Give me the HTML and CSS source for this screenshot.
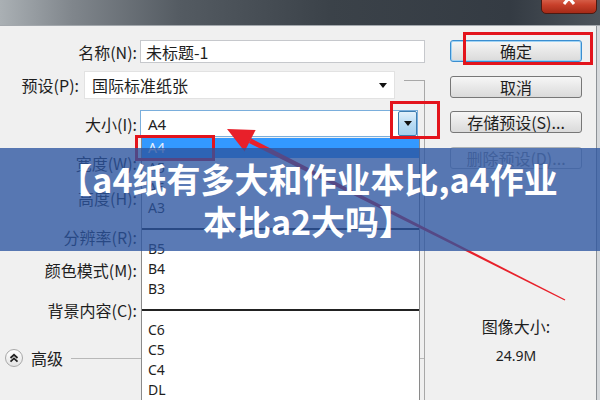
FILE: index.html
```html
<!DOCTYPE html>
<html lang="zh-CN">
<head>
    <meta charset="UTF-8">
    <meta name="viewport" content="width=device-width, initial-scale=1.0">
    <title>新建</title>
    <link rel="stylesheet" href="styles.css">
</head>
<body>
<div class="window">
    <div class="titlebar">
        <div class="close">
            <svg width="16" height="12" viewBox="0 0 16 12"><path d="M3 -3 L13 9 M13 -3 L3 9" stroke="#fff" stroke-width="3" fill="none"/></svg>
        </div>
    </div>

    <div class="dialog">
        <div class="form">
            <div class="row r-name">
                <span class="label">名称(N):</span>
                <div class="input">未标题-1</div>
            </div>
            <div class="row r-preset">
                <span class="label short">预设(P):</span>
                <div class="select preset">国际标准纸张<span class="tri"></span></div>
            </div>
            <div class="row r-size">
                <span class="label">大小(I):</span>
                <div class="select size">A4<span class="drop-btn"><span class="tri"></span></span></div>
            </div>
            <div class="row r-width"><span class="label">宽度(W):</span></div>
            <div class="row r-height"><span class="label">高度(H):</span></div>
            <div class="row r-res"><span class="label">分辨率(R):</span></div>
            <div class="row r-mode"><span class="label">颜色模式(M):</span></div>
            <div class="row r-bg"><span class="label">背景内容(C):</span></div>
            <div class="row r-adv">
                <span class="adv-icon">
                    <svg width="18" height="18" viewBox="0 0 18 18"><path d="M5.5 9 L9 5.8 L12.5 9 M5.5 12.6 L9 9.4 L12.5 12.6" stroke="#222" stroke-width="1.8" fill="none"/></svg>
                </span>
                <span class="adv-text">高级</span>
                <span class="adv-line"></span>
            </div>
        </div>

        <div class="bracket"></div>

        <div class="side">
            <button class="btn default">确定</button>
            <button class="btn b-cancel">取消</button>
            <button class="btn b-save">存储预设(S)...</button>
            <button class="btn b-del" disabled>删除预设(D)...</button>
            <div class="info">
                <div class="info-label">图像大小:</div>
                <div class="info-value">24.9M</div>
            </div>
        </div>
    </div>

    <ul class="menu">
        <li class="active">A4</li>
        <li>A5</li>
        <li>A6</li>
        <li>A3</li>
        <li class="sep"></li>
        <li>B5</li>
        <li>B4</li>
        <li>B3</li>
        <li class="sep"></li>
        <li>C6</li>
        <li>C5</li>
        <li>C4</li>
        <li>DL</li>
    </ul>

    <div class="mark mark-ok"></div>
    <div class="mark mark-btn"></div>
    <div class="mark mark-a4"></div>

    <svg class="arrow" width="600" height="400" viewBox="0 0 600 400">
        <polygon points="227,129 255.6,130.1 244.6,151.5" fill="#e8202a"/>
        <polygon points="249,143 251.2,138.6 565.3,299.5 564.7,300.5" fill="#e8202a"/>
    </svg>

    <div class="banner">【a4纸有多大和作业本比,a4作业<br>本比a2大吗】</div>
</div>
</body>
</html>
```

FILE: styles.css
```css
body {
    margin: 0;
    width: 600px;
    height: 400px;
    overflow: hidden;
    font-family: "Noto Sans CJK SC", "Noto Sans", sans-serif;
    font-size: 16px;
    color: #1e1e1e;
    background: #d6d9dc;
}
.window {
    position: relative;
    width: 600px;
    height: 400px;
}
.titlebar {
    height: 25px;
    border-bottom: 1px solid #a3a8ad;
    background: linear-gradient(to right, #aab0b4 0%, #80868c 12%, #545b62 30%, #3b4249 55%, #343b43 85%, #4d545b 100%);
    display: flex;
    justify-content: flex-end;
    padding-right: 3px;
}
.close {
    margin-top: -6px;
    width: 56px;
    height: 20px;
    box-sizing: border-box;
    border: 1px solid #4b1a12;
    border-radius: 0 0 5px 5px;
    background: linear-gradient(#e27a64, #c8402a 55%, #a52a17);
    display: flex;
    justify-content: center;
    align-items: flex-end;
    padding-bottom: 6px;
}
.dialog {
    position: relative;
    display: flex;
    width: 596px;
    height: 374px;
    background: #f0f0f0;
    border-right: 1px solid #8c9196;
}
.form {
    width: 425px;
    padding-top: 14px;
}
.row {
    display: flex;
    align-items: center;
    height: 20px;
}
.label {
    width: 137px;
    text-align: right;
    white-space: nowrap;
    flex-shrink: 0;
}
.label.short {
    width: 79px;
}
.r-name { height: 23px; }
.r-preset { margin-top: 8px; height: 28px; }
.r-size { margin-top: 11px; height: 27px; }
.r-width { margin-top: 16px; }
.r-height { margin-top: 15px; }
.r-res { margin-top: 19px; }
.r-mode { margin-top: 13px; }
.r-bg { margin-top: 20px; }
.r-adv { margin-top: 28px; padding-left: 5px; }

.input, .select {
    box-sizing: border-box;
    height: 100%;
    background: #fff;
    display: flex;
    align-items: center;
    padding-left: 5px;
    position: relative;
}
.input {
    margin-left: 3px;
    width: 290px;
    border: 1px solid #c6c8cc;
}
.select.preset {
    margin-left: 5px;
    width: 311px;
    border: 1px solid #e2e2e2;
    padding-left: 7px;
}
.select.preset .tri {
    margin-left: auto;
    margin-right: 7px;
}
.select.size {
    margin-left: 3px;
    width: 278px;
    border: 1px solid #7aaedc;
    font-family: "Noto Sans", sans-serif;
    font-size: 15px;
    padding-left: 7px;
}
.tri {
    width: 0;
    height: 0;
    border-left: 4px solid transparent;
    border-right: 4px solid transparent;
    border-top: 5px solid #111;
}
.drop-btn {
    margin-left: auto;
    width: 19px;
    height: 25px;
    box-sizing: border-box;
    border: 1px solid #3d7db0;
    border-radius: 2px;
    background: linear-gradient(#e3f1fb, #b9dcf4 50%, #a3cfee);
    display: flex;
    align-items: center;
    justify-content: center;
}
.adv-icon {
    width: 18px;
    height: 18px;
    box-sizing: border-box;
    border: 1px solid #a8a8a8;
    border-radius: 50%;
    background: linear-gradient(#ffffff, #e4e4e4);
    display: flex;
    align-items: center;
    justify-content: center;
}
.adv-icon svg {
    margin: -1px;
}
.adv-text {
    margin-left: 8px;
    font-size: 16px;
}
.adv-line {
    flex: 1;
    height: 1px;
    background: #b8b8b8;
    margin-left: 8px;
}
.bracket {
    position: absolute;
    left: 404px;
    top: 54px;
    width: 20px;
    bottom: 0;
    border-top: 1px solid #a8a8a8;
    border-right: 1px solid #a8a8a8;
}
.side {
    padding-top: 14px;
    padding-left: 25px;
    display: flex;
    flex-direction: column;
}
.btn {
    width: 132px;
    height: 22px;
    padding: 0;
    font-family: inherit;
    font-size: 16px;
    color: #1e1e1e;
    border: 1px solid #777;
    border-radius: 3px;
    background: linear-gradient(#f6f6f6, #e8e8e8 50%, #dadada);
    line-height: 20px;
}
.btn.default {
    border-color: #3b8ed0;
    box-shadow: inset 0 0 0 1px #9fd3f5;
}
.b-cancel { margin-top: 14px; }
.b-save { margin-top: 13px; }
.b-del {
    margin-top: 14px;
    color: #8a8a8a;
    border-color: #adb2b5;
    background: #f4f4f4;
}
.info {
    width: 132px;
    text-align: center;
    margin-top: 147px;
}
.info-label {
    line-height: 20px;
}
.info-value {
    margin-top: 10px;
    line-height: 20px;
    font-family: "Noto Sans", sans-serif;
    font-size: 14px;
}
.menu {
    position: absolute;
    left: 141px;
    top: 138px;
    width: 279px;
    height: 270px;
    box-sizing: border-box;
    margin: 0;
    padding: 0;
    list-style: none;
    background: #fff;
    border-left: 1px solid #8a8a8a;
    border-right: 1px solid #8a8a8a;
    font-family: "Noto Sans", sans-serif;
    font-size: 14px;
}
.menu li {
    height: 20px;
    line-height: 20px;
    padding-left: 6px;
}
.menu li.active {
    background: #3399ff;
    color: #e9f0fa;
}
.menu li.sep {
    height: 21px;
    padding: 0;
    position: relative;
}
.menu li.sep::after {
    content: "";
    position: absolute;
    left: 0;
    right: 0;
    top: 10px;
    height: 2px;
    background: #222;
}
.mark {
    position: absolute;
    box-sizing: border-box;
    border: 3px solid #e3141c;
}
.mark-ok { left: 463px; top: 32px; width: 130px; height: 33px; }
.mark-btn { left: 390px; top: 101px; width: 50px; height: 38px; }
.mark-a4 { left: 135px; top: 135px; width: 80px; height: 26px; }
.arrow {
    position: absolute;
    left: 0;
    top: 0;
}
.banner {
    position: absolute;
    left: 0;
    top: 148px;
    width: 600px;
    height: 103px;
    box-sizing: border-box;
    padding-top: 10px;
    padding-left: 16px;
    background: rgba(44, 85, 160, 0.78);
    color: #fff;
    font-weight: 700;
    font-size: 34px;
    line-height: 42px;
    text-align: center;
    white-space: nowrap;
}
```
